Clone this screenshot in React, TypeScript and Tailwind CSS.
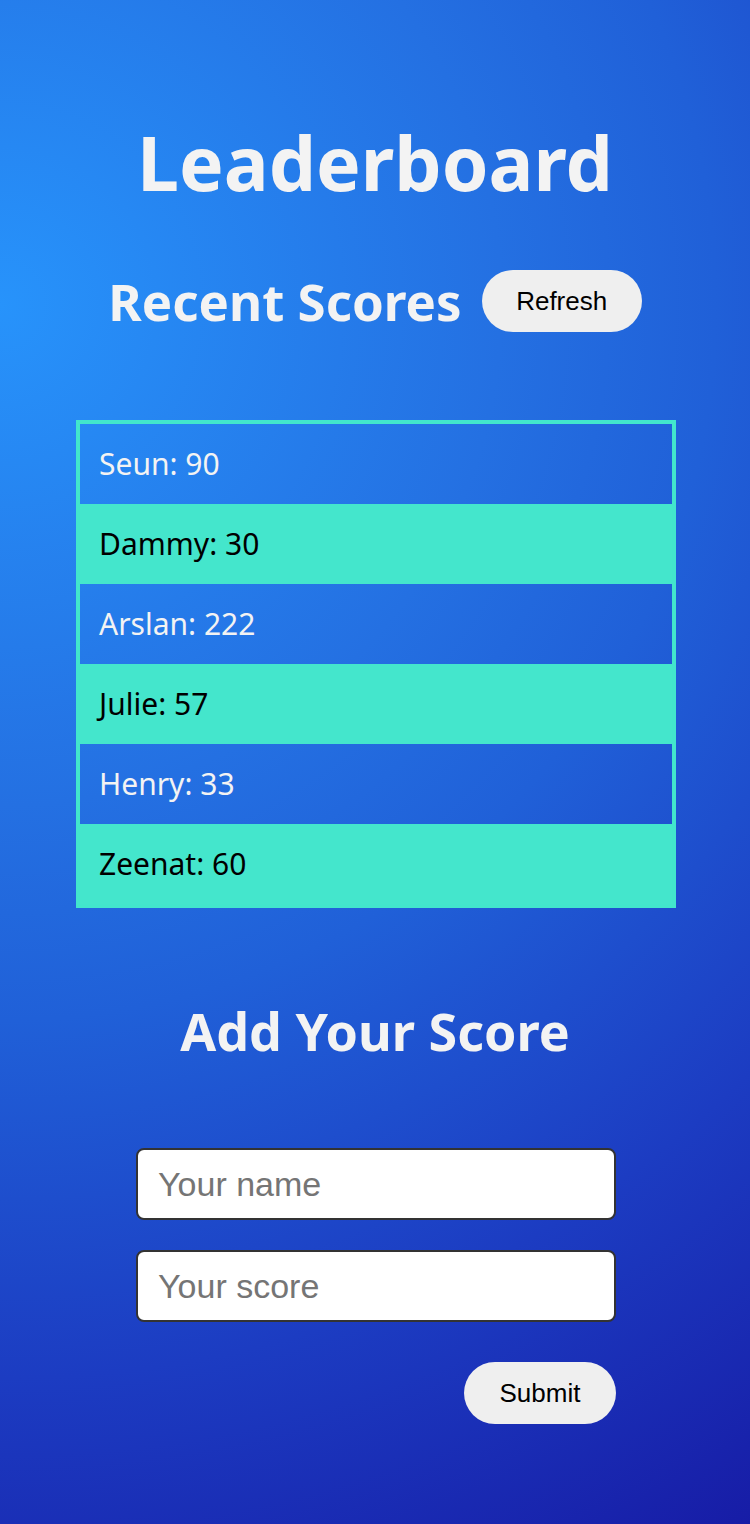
import { useState } from "react";

const scores = [
  { name: "Seun", score: 90 },
  { name: "Dammy", score: 30 },
  { name: "Arslan", score: 222 },
  { name: "Julie", score: 57 },
  { name: "Henry", score: 33 },
  { name: "Zeenat", score: 60 },
];

export default function App() {
  const [name, setName] = useState("");
  const [score, setScore] = useState("");

  return (
    <main className="min-h-[1524px] w-full bg-[radial-gradient(circle_farthest-corner_at_0%_20%,#2793fb_0%,#2470e2_35%,#2060d8_50%,#1c3cc2_75%,#171ca6_100%)] font-['Noto_Sans',sans-serif] text-[#f3f3f3]">
      <div className="flex flex-col items-center pt-[112px] pb-[100px]">
        <h1 className="text-[75px] font-bold leading-[100px]">Leaderboard</h1>

        <div className="mt-[54px] flex items-center gap-5">
          <h2 className="text-[51px] font-bold leading-[70px]">Recent Scores</h2>
          <button className="h-[62px] w-[160px] rounded-full bg-[#efefef] font-['Liberation_Sans',sans-serif] text-[26px] text-black">
            Refresh
          </button>
        </div>

        <ul className="mt-[84px] ml-[2px] w-[600px] border-4 border-[#42e6cc]">
          {scores.map((s, i) => (
            <li
              key={s.name}
              className={
                i % 2 === 0
                  ? "flex h-[80px] items-center pl-[19px] pr-5 pb-[2px] text-[30px] text-[#f3f3f3]"
                  : "flex h-[80px] items-center bg-[#44e6cc] pl-[19px] pr-5 pb-[2px] text-[30px] text-black"
              }
            >
              {s.name}: {s.score}
            </li>
          ))}
        </ul>

        <h2 className="mt-[88px] text-[52px] font-bold leading-[70px]">Add Your Score</h2>

        <form className="mt-[82px] ml-[2px] flex w-[480px] flex-col gap-[30px]" onSubmit={(e) => e.preventDefault()}>
          <input
            value={name}
            onChange={(e) => setName(e.target.value)}
            placeholder="Your name"
            className="h-[72px] rounded-lg border-2 border-[#333] bg-white px-5 font-['Liberation_Sans',sans-serif] text-[34px] text-black placeholder:text-[#757575]"
          />
          <input
            value={score}
            onChange={(e) => setScore(e.target.value)}
            placeholder="Your score"
            className="h-[72px] rounded-lg border-2 border-[#333] bg-white px-5 font-['Liberation_Sans',sans-serif] text-[34px] text-black placeholder:text-[#757575]"
          />
          <button
            type="submit"
            className="mt-[10px] h-[62px] w-[152px] self-end rounded-full bg-[#efefef] font-['Liberation_Sans',sans-serif] text-[26px] text-black"
          >
            Submit
          </button>
        </form>
      </div>
    </main>
  );
}
